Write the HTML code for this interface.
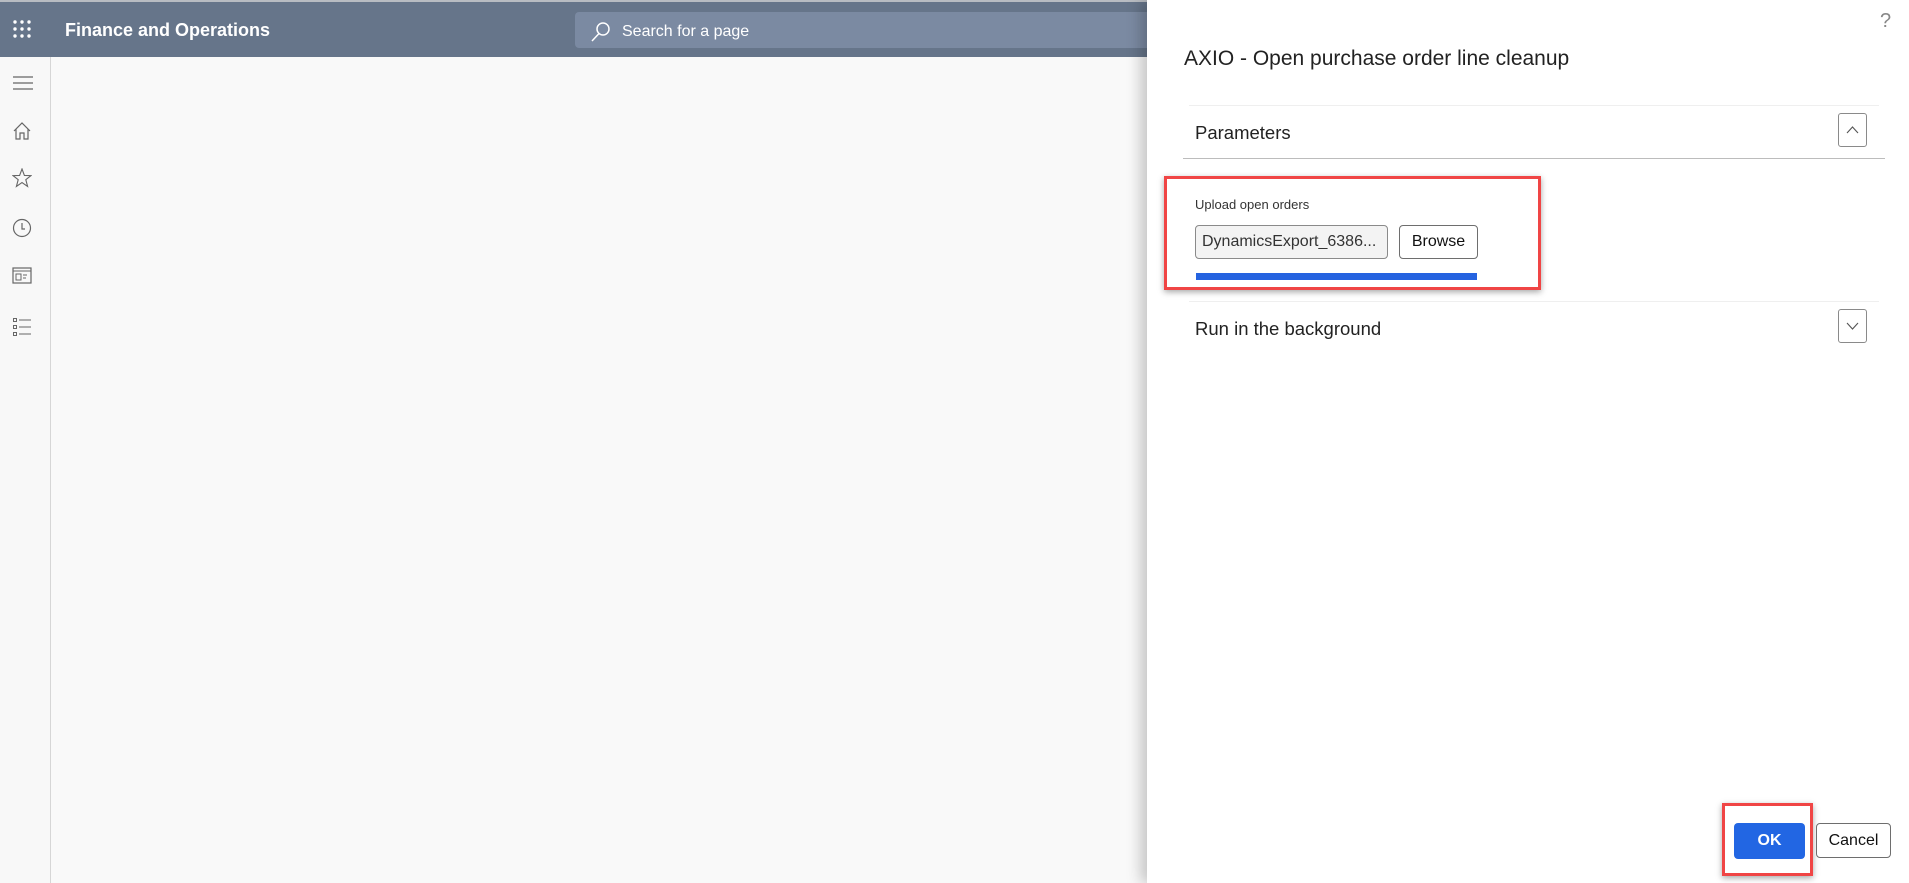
<!DOCTYPE html>
<html><head><meta charset="utf-8"><style>
*{box-sizing:border-box;margin:0;padding:0}
body{width:1909px;height:883px;overflow:hidden;background:#f9f9f9;font-family:"Liberation Sans",sans-serif;position:relative}
.abs{position:absolute}
#hdr{left:0;top:0;width:1909px;height:57px;background:#66758a;border-top:2px solid #b8bcc2}
#side{left:0;top:57px;width:51px;height:826px;background:#f8f8f8;border-right:1px solid #d6d6d6}
#panel{left:1147px;top:0;width:762px;height:883px;background:#fff;box-shadow:-6px 0 14px rgba(0,0,0,.22)}
.chev{width:29px;height:34px;border:1px solid #8a8a8a;border-radius:3px;background:#fff}
.btn{border:1px solid #6e6e6e;border-radius:4px;background:#fff;font-size:16px;color:#111;display:flex;align-items:center;justify-content:center}
.red{border:3px solid #f04545;box-shadow:0 2px 6px rgba(0,0,0,.35)}
</style></head><body>
<div id="hdr" class="abs">
 <svg class="abs" style="left:13px;top:18px" width="20" height="18">
  <g fill="#fff"><circle cx="2" cy="2" r="1.7"/><circle cx="9" cy="2" r="1.7"/><circle cx="16" cy="2" r="1.7"/><circle cx="2" cy="9" r="1.7"/><circle cx="9" cy="9" r="1.7"/><circle cx="16" cy="9" r="1.7"/><circle cx="2" cy="16" r="1.7"/><circle cx="9" cy="16" r="1.7"/><circle cx="16" cy="16" r="1.7"/></g></svg>
 <div class="abs" style="left:65px;top:18px;color:#fff;font-size:18px;font-weight:bold">Finance and Operations</div>
 <div class="abs" style="left:575px;top:10px;width:600px;height:36px;background:#7b8aa2;border-radius:4px">
  <svg class="abs" style="left:15px;top:9px" width="22" height="22"><circle cx="13" cy="8" r="6" fill="none" stroke="#fff" stroke-width="1.5"/><path d="M9 12.5L2 20" stroke="#fff" stroke-width="1.5"/></svg>
  <div class="abs" style="left:47px;top:11px;color:#fff;font-size:16px">Search for a page</div>
 </div>
</div>
<div id="side" class="abs">
 <svg class="abs" style="left:12px;top:18px" width="22" height="16"><path d="M1 2H21M1 8H21M1 14H21" stroke="#666" stroke-width="1.2"/></svg>
 <svg class="abs" style="left:12px;top:64px" width="20" height="20"><path d="M2 10L10 2L18 10M4 8V18H8V12H12V18H16V8" fill="none" stroke="#666" stroke-width="1.2"/></svg>
 <svg class="abs" style="left:12px;top:111px" width="20" height="20"><path d="M10 1L12.4 7.4L19 7.6L13.8 11.7L15.6 18.5L10 14.6L4.4 18.5L6.2 11.7L1 7.6L7.6 7.4Z" fill="none" stroke="#666" stroke-width="1.1"/></svg>
 <svg class="abs" style="left:12px;top:161px" width="20" height="20"><circle cx="10" cy="10" r="8.5" fill="none" stroke="#666" stroke-width="1.2"/><path d="M10 5V11H13" fill="none" stroke="#666" stroke-width="1.2"/></svg>
 <svg class="abs" style="left:12px;top:210px" width="20" height="18"><rect x="1" y="1" width="18" height="15" fill="none" stroke="#666" stroke-width="1.2"/><path d="M1 4H19" stroke="#666"/><rect x="4" y="7" width="5" height="6" fill="none" stroke="#666"/><path d="M11 8H15M11 11H14" stroke="#666"/></svg>
 <svg class="abs" style="left:12px;top:260px" width="20" height="20"><g fill="none" stroke="#666"><rect x="1.5" y="1.5" width="3" height="3"/><rect x="1.5" y="8.5" width="3" height="3"/><rect x="1.5" y="15.5" width="3" height="3"/><path d="M7 3H19M7 10H19M7 17H19"/></g></svg>
</div>
<div id="panel" class="abs">
 <div class="abs" style="left:733px;top:10px;font-size:20px;color:#888">?</div>
 <div class="abs" style="left:37px;top:47px;font-size:21px;color:#222">AXIO - Open purchase order line cleanup</div>
 <div class="abs" style="left:42px;top:105px;width:690px;border-top:1px solid #efefef"></div>
 <div class="abs" style="left:48px;top:122px;font-size:18.5px;color:#222">Parameters</div>
 <div class="abs chev" style="left:691px;top:113px"><svg width="27" height="32"><path d="M8 19L13.5 13L19 19" fill="none" stroke="#555" stroke-width="1.1"/></svg></div>
 <div class="abs" style="left:36px;top:158px;width:702px;border-top:1px solid #bcbcbc"></div>
 <div class="abs red" style="left:17px;top:176px;width:377px;height:114px"></div>
 <div class="abs" style="left:48px;top:197px;font-size:13px;color:#333">Upload open orders</div>
 <div class="abs btn" style="left:48px;top:225px;width:193px;height:34px;background:#f3f3f3;border-color:#8a8a8a;justify-content:flex-start;padding-left:6px;color:#333">DynamicsExport_6386...</div>
 <div class="abs btn" style="left:252px;top:225px;width:79px;height:34px">Browse</div>
 <div class="abs" style="left:49px;top:273px;width:281px;height:7px;background:#2563e0"></div>
 <div class="abs" style="left:42px;top:301px;width:690px;border-top:1px solid #efefef"></div>
 <div class="abs" style="left:48px;top:318px;font-size:18.5px;color:#222">Run in the background</div>
 <div class="abs chev" style="left:691px;top:309px"><svg width="27" height="32"><path d="M8 13L13.5 19L19 13" fill="none" stroke="#555" stroke-width="1.1"/></svg></div>
 <div class="abs red" style="left:575px;top:803px;width:91px;height:73px"></div>
 <div class="abs btn" style="left:587px;top:823px;width:71px;height:36px;background:#2266e3;border:none;color:#fff;font-weight:bold">OK</div>
 <div class="abs btn" style="left:669px;top:823px;width:75px;height:35px">Cancel</div>
</div>
</body></html>
